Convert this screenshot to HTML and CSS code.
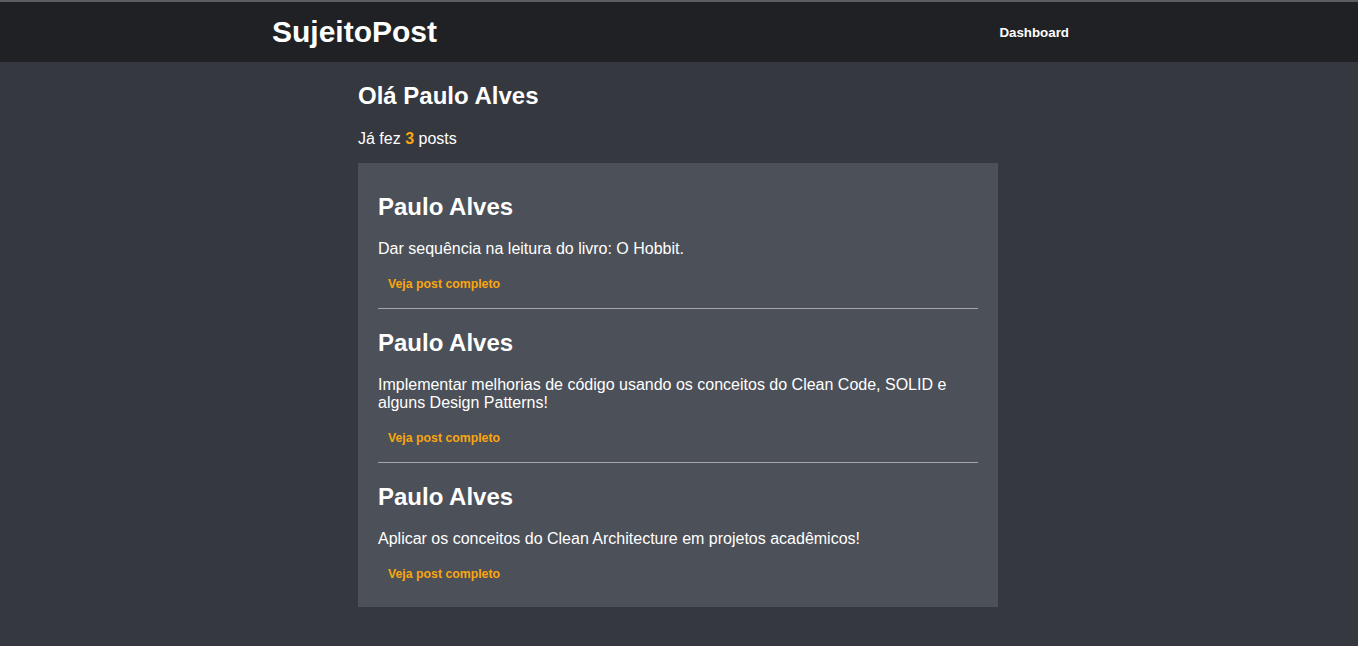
FILE: index.html
```html
<!DOCTYPE html>
<html lang="pt-BR">
<head>
<meta charset="utf-8">
<title>SujeitoPost</title>
<link rel="stylesheet" href="styles.css">
</head>
<body>
<header class="header">
  <div class="header-inner">
    <a class="logo" href="#">SujeitoPost</a>
    <nav class="nav"><a class="nav-link" href="#">Dashboard</a></nav>
  </div>
</header>
<main class="main">
  <h1 class="greeting">Olá Paulo Alves</h1>
  <p class="count">Já fez <strong class="num">3</strong> posts</p>
  <section class="card">
    <article class="post">
      <h2 class="post-title">Paulo Alves</h2>
      <p class="post-text">Dar sequência na leitura do livro: O Hobbit.</p>
      <a class="post-link" href="#">Veja post completo</a>
    </article>
    <article class="post">
      <h2 class="post-title">Paulo Alves</h2>
      <p class="post-text">Implementar melhorias de código usando os conceitos do Clean Code, SOLID e alguns Design Patterns!</p>
      <a class="post-link" href="#">Veja post completo</a>
    </article>
    <article class="post">
      <h2 class="post-title">Paulo Alves</h2>
      <p class="post-text">Aplicar os conceitos do Clean Architecture em projetos acadêmicos!</p>
      <a class="post-link" href="#">Veja post completo</a>
    </article>
  </section>
</main>
</body>
</html>
```

FILE: styles.css
```css
* { box-sizing: border-box; }
html, body {
  margin: 0;
  padding: 0;
  background: #36383f;
  font-family: "Liberation Sans", Arial, sans-serif;
  color: #fff;
}
.header {
  background: #202124;
  border-top: 2px solid #5c5d61;
  height: 62px;
}
.header-inner {
  width: 814px;
  margin: 0 auto;
  height: 60px;
  display: flex;
  align-items: center;
  justify-content: space-between;
}
.logo {
  color: #fff;
  text-decoration: none;
  font-weight: bold;
  font-size: 30px;
  line-height: 34px;
}
.nav-link {
  color: #fff;
  text-decoration: none;
  font-weight: bold;
  font-size: 13.33px;
  margin-right: 17px;
}
.main {
  width: 642px;
  padding-right: 2px;
  margin: 0 auto;
  padding-top: 20px;
}
.greeting {
  margin: 0;
  font-size: 24px;
  line-height: 28px;
  font-weight: bold;
}
.count {
  margin: 20px 0 15px;
  font-size: 16px;
  line-height: 18px;
}
.num { color: #f9a60f; }
.card {
  background: #4c5058;
  padding: 10px 20px 9px;
}
.post {
  padding: 20px 0 17px;
  border-bottom: 1px solid #a4a6aa;
  display: flex;
  flex-direction: column;
  align-items: flex-start;
}
.post:last-child { border-bottom: none; }
.post-title {
  margin: 0;
  font-size: 24px;
  line-height: 28px;
  font-weight: bold;
}
.post-text {
  margin: 19px 0 0;
  font-size: 16px;
  line-height: 18px;
}
.post-link {
  margin: 19px 0 0 10px;
  color: #f9a60f;
  font-weight: bold;
  font-size: 12.3px;
  line-height: 14px;
  text-decoration: none;
}
```
